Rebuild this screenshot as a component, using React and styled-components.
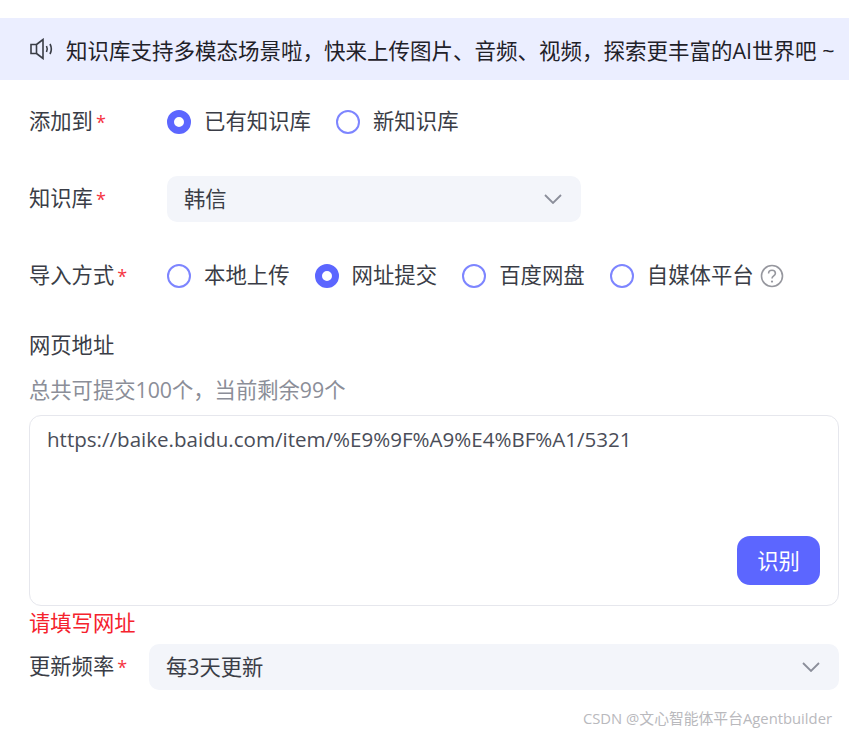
import React from "react";
import styled, { createGlobalStyle } from "styled-components";

const GlobalStyle = createGlobalStyle`
  html, body {
    margin: 0;
    background: #fff;
  }
  body {
    font-family: "Open Sans", "Noto Sans CJK SC", sans-serif;
    color: #3a3d46;
  }
`;

const Page = styled.div`
  width: 849px;
  height: 734px;
  padding-top: 18px;
  box-sizing: border-box;
  position: relative;
  overflow: hidden;
`;

const Notice = styled.div`
  height: 62px;
  background: #ebeeff;
  display: flex;
  align-items: center;
  padding-left: 30px;
  gap: 12px;
  font-size: 21.5px;
  color: #1f2129;
  white-space: nowrap;
`;

const Row = styled.div`
  display: flex;
  align-items: center;
  padding-left: 29px;
  height: ${(p) => p.$height}px;
  margin-top: ${(p) => p.$top || 0}px;
`;

const Label = styled.div`
  width: ${(p) => p.$width || 138}px;
  flex-shrink: 0;
  font-size: 21.3px;
  line-height: 28px;
  margin-top: -2px;
  white-space: nowrap;
`;

const Star = styled.span`
  color: #f5333f;
  margin-left: 3px;
  font-size: 18px;
`;

const RadioGroup = styled.div`
  display: flex;
  align-items: center;
`;

const Radio = styled.span`
  width: 24px;
  height: 24px;
  border-radius: 50%;
  box-sizing: border-box;
  border: ${(p) => (p.$on ? "7px solid #5c66ff" : "2px solid #7d85ff")};
  background: #fff;
  flex-shrink: 0;
`;

const RadioText = styled.span`
  font-size: 21.4px;
  line-height: 28px;
  margin-top: -2px;
  margin-left: 13px;
  margin-right: ${(p) => p.$gap || 0}px;
  white-space: nowrap;
`;

const Select = styled.div`
  height: 46px;
  width: ${(p) => p.$width}px;
  border-radius: 10px;
  background: #f3f5fa;
  display: flex;
  align-items: center;
  justify-content: space-between;
  padding: 0 19px 0 17px;
  box-sizing: border-box;
  font-size: 21.3px;
`;

const SelectValue = styled.span`
  margin-top: -3px;
`;

const SubLabel = styled.div`
  padding-left: 29px;
  font-size: 21.3px;
  line-height: 28px;
  margin-top: ${(p) => p.$top}px;
  color: ${(p) => p.$color || "#3a3d46"};
  white-space: nowrap;
`;

const UrlBox = styled.div`
  width: 810px;
  height: 191px;
  margin: 11px 0 0 29px;
  box-sizing: border-box;
  border: 1.5px solid #e6e7ed;
  border-radius: 12px;
  padding: 9px 17px 0;
  position: relative;
  font-size: 20.55px;
  line-height: 28px;
  color: #4a4d58;
`;

const Identify = styled.button`
  position: absolute;
  right: 18px;
  bottom: 20px;
  width: 83px;
  height: 49px;
  border: 0;
  border-radius: 13px;
  background: #5c66ff;
  color: #fff;
  font: inherit;
  font-size: 21.3px;
  padding: 0;
`;

const ErrorText = styled.div`
  padding-left: 29px;
  font-size: 21.3px;
  line-height: 28px;
  margin-top: 3px;
  color: #f5222d;
`;

const Watermark = styled.div`
  position: absolute;
  right: 17px;
  top: 708px;
  font-size: 14.8px;
  line-height: 20px;
  color: #b9b9bd;
  white-space: nowrap;
`;

const Chevron = () => (
  <svg width="18" height="10" viewBox="0 0 18 10" fill="none">
    <path d="M1 1l8 8 8-8" stroke="#8b8e9a" strokeWidth="1.8" />
  </svg>
);

const Speaker = () => (
  <svg width="24" height="22" viewBox="0 0 24 22" fill="none" stroke="#3a3d46" strokeWidth="1.6">
    <path d="M1 6.5h5.5v9H1zM6.5 6.5l6.5-5v19l-6.5-5" />
    <path d="M16.5 8c1 2 1 4 0 6M20 6c1.6 3 1.6 7 0 10" />
  </svg>
);

const HelpIcon = styled.svg`
  margin-left: 6px;
`;

const Help = () => (
  <HelpIcon width="24" height="24" viewBox="0 0 24 24" fill="none">
    <circle cx="12" cy="12" r="10.5" stroke="#96979e" strokeWidth="1.6" />
    <path d="M8.6 9.5c0-2 1.5-3.2 3.4-3.2s3.4 1.2 3.4 3c0 2.6-3.4 2.6-3.4 5.2" stroke="#96979e" strokeWidth="1.6" />
    <circle cx="12" cy="17.6" r="1.1" fill="#96979e" />
  </HelpIcon>
);

export default function App() {
  return (
    <Page>
      <GlobalStyle />
      <Notice>
        <Speaker />
        <span>知识库支持多模态场景啦，快来上传图片、音频、视频，探索更丰富的AI世界吧 ~</span>
      </Notice>
      <Row $height={84}>
        <Label>添加到<Star>*</Star></Label>
        <RadioGroup>
          <Radio $on />
          <RadioText $gap={25}>已有知识库</RadioText>
          <Radio />
          <RadioText>新知识库</RadioText>
        </RadioGroup>
      </Row>
      <Row $height={46} $top={12}>
        <Label>知识库<Star>*</Star></Label>
        <Select $width={414}><SelectValue>韩信</SelectValue><Chevron /></Select>
      </Row>
      <Row $height={28} $top={40}>
        <Label>导入方式<Star>*</Star></Label>
        <RadioGroup>
          <Radio />
          <RadioText $gap={25}>本地上传</RadioText>
          <Radio $on />
          <RadioText $gap={25}>网址提交</RadioText>
          <Radio />
          <RadioText $gap={25}>百度网盘</RadioText>
          <Radio />
          <RadioText>自媒体平台</RadioText>
          <Help />
        </RadioGroup>
      </Row>
      <SubLabel $top={41}>网页地址</SubLabel>
      <SubLabel $top={17} $color="#8b8e98">总共可提交100个，当前剩余99个</SubLabel>
      <UrlBox>
        https://baike.baidu.com/item/%E9%9F%A9%E4%BF%A1/5321
        <Identify>识别</Identify>
      </UrlBox>
      <ErrorText>请填写网址</ErrorText>
      <Row $height={46} $top={7}>
        <Label $width={120}>更新频率<Star>*</Star></Label>
        <Select $width={690}><SelectValue>每3天更新</SelectValue><Chevron /></Select>
      </Row>
      <Watermark>CSDN @文心智能体平台Agentbuilder</Watermark>
    </Page>
  );
}
